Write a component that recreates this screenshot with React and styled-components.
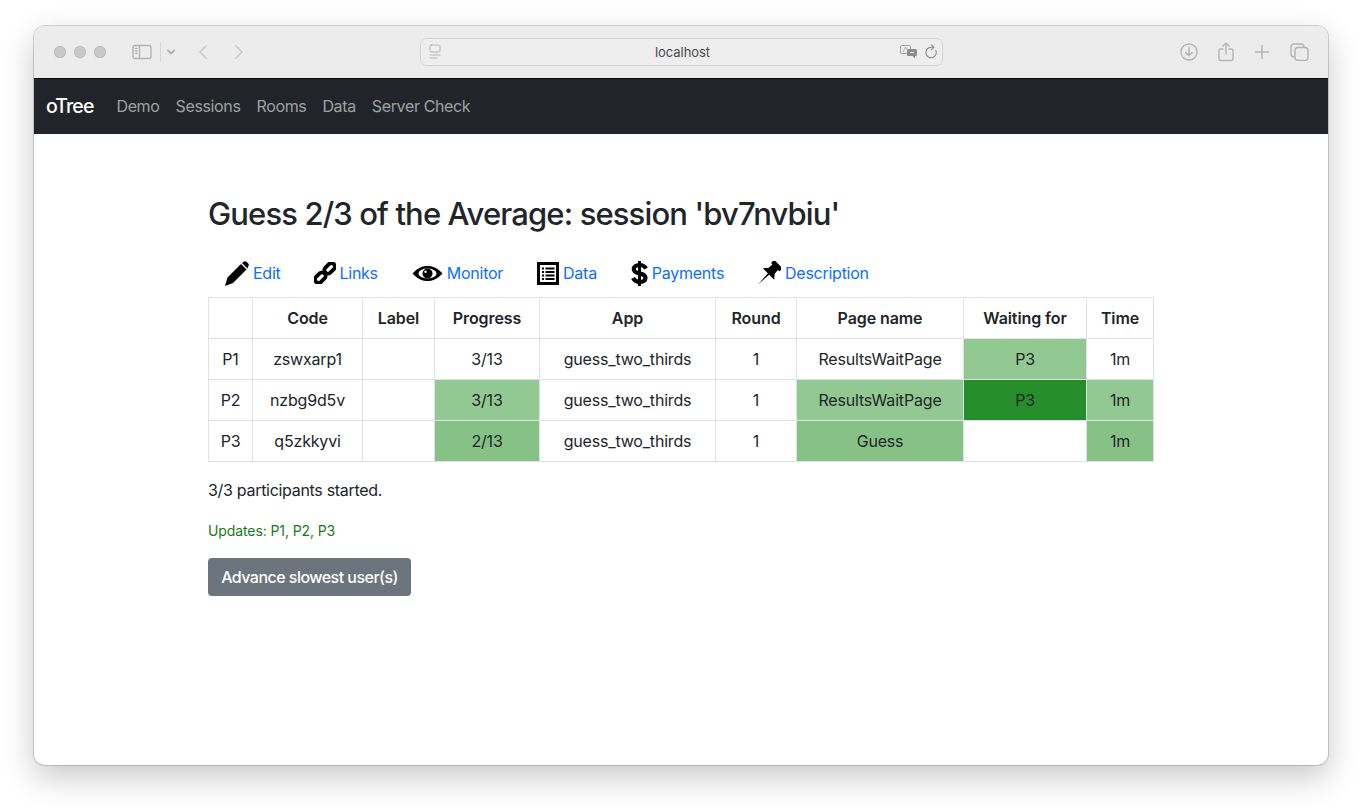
import React from "react";
import styled, { createGlobalStyle } from "styled-components";

const Global = createGlobalStyle`
  html, body { margin: 0; padding: 0; background: #fff; }
  body { font-family: Inter, "Liberation Sans", sans-serif; color: #212529; }
`;
const Stage = styled.div`
  width: 1362px; height: 807px; box-sizing: border-box; padding: 26px 34px 42px; overflow: hidden; background: #fff;
`;
const Win = styled.div`
  height: 739px; border-radius: 11px; overflow: hidden; background: #fff; display: flex; flex-direction: column;
  box-shadow: 0 0 0 1px rgba(0,0,0,.16), 0 12px 32px rgba(0,0,0,.22);
`;
const Chrome = styled.div`
  height: 52px; flex: none; background: #ececec; border-bottom: 1px solid #0b0b0b; display: grid;
  grid-template-columns: 1fr 523px 1fr; align-items: center; padding: 0 19px 0 20px; color: #b4b4b4;
`;
const ChromeLeft = styled.div`display: flex; align-items: center;`;
const ChromeRight = styled.div`display: flex; align-items: center; justify-content: flex-end; gap: 20px;`;
const Lights = styled.div`display: flex; gap: 8px; margin-right: 26px;`;
const Light = styled.span`width: 12px; height: 12px; border-radius: 50%; background: #c9c9c9; box-shadow: inset 0 0 0 1px #bdbdbd;`;
const Divider = styled.span`width: 1px; height: 20px; background: #d6d6d6; margin: 0 5px 0 8px;`;
const Spacer = styled.span`width: ${p => p.$w}px;`;
const Address = styled.div`
  height: 26px; border: 1px solid #d4d4d4; border-radius: 7px; display: flex; align-items: center; justify-content: space-between;
  padding: 0 4px 0 8px; position: relative; background: #eeeeee; margin-top: -1px;
`;
const Host = styled.span`font-size: 13px; color: #4a4a4a; position: absolute; left: 2px; right: 0; text-align: center; letter-spacing: -.05px;`;
const AddrIcons = styled.div`display: flex; align-items: center; gap: 6px;`;
const Nav = styled.nav`
  height: 55px; box-sizing: border-box; flex: none; background: #212529; display: flex; align-items: center; padding: 0 12px 2px;
`;
const Brand = styled.span`color: #fff; font-size: 19.500px; margin-right: 15px; letter-spacing: -.9px; font-weight: 500;`;
const NavItem = styled.span`color: rgba(255,255,255,.58); font-size: 16px; padding: 0 8px; letter-spacing: -.36px;`;
const Main = styled.main`padding: 61px 174px 0;`;
const Title = styled.h2`margin: 0 0 23px; font-size: 31px; line-height: 38px; font-weight: 500; letter-spacing: -.87px;`;
const Tabs = styled.div`display: flex; height: 34px; align-items: center;`;
const Tab = styled.a`
  display: flex; align-items: center; color: #0d6efd; font-size: 16px; letter-spacing: -.26px; margin-left: ${p => p.$left}px;
  svg { margin-right: ${p => p.$gap}px; flex: none; }
`;
const Table = styled.table`
  border-collapse: collapse; table-layout: fixed; width: 945px; margin-top: 7px; font-size: 16px; letter-spacing: -.18px;
`;
const Th = styled.th`
  border: 1px solid #dee2e6; height: 41px; padding: 0; font-weight: 600; text-align: center; box-sizing: border-box; letter-spacing: -.1px;
`;
const Td = styled.td`
  border: 1px solid #dee2e6; height: 41px; padding: 0; text-align: center; box-sizing: border-box; background: ${p => p.$bg || "#fff"};
`;
const Started = styled.p`margin: 19px 0 0; font-size: 16px; line-height: 19px; letter-spacing: -.3px;`;
const Updates = styled.p`margin: 22px 0 0; font-size: 14px; line-height: 17px; color: #1a7a1a; letter-spacing: -.1px;`;
const Button = styled.button`
  display: block; margin-top: 19px; width: 203px; height: 38px; border: 0; border-radius: 4px; background: #6c757d; color: #fff; padding: 0;
  font: 500 16px Inter, "Liberation Sans", sans-serif; letter-spacing: -.53px;
`;

const widths = [44, 110, 72, 105, 176, 81, 167, 123, 67];
const heads = ["", "Code", "Label", "Progress", "App", "Round", "Page name", "Waiting for", "Time"];
const L = "#92c892", D = "#258e2a", M = "#86c286";
const rows = [
  [["P1"], ["zswxarp1"], [""], ["3/13"], ["guess_two_thirds"], ["1"], ["ResultsWaitPage"], ["P3", L], ["1m"]],
  [["P2"], ["nzbg9d5v"], [""], ["3/13", L], ["guess_two_thirds"], ["1"], ["ResultsWaitPage", L], ["P3", D], ["1m", L]],
  [["P3"], ["q5zkkyvi"], [""], ["2/13", M], ["guess_two_thirds"], ["1"], ["Guess", M], [""], ["1m", M]],
];

const PencilIcon = () => (
  <svg width="24" height="25" viewBox="0 0 24 25">
    <path d="M0 25 2.500 16.500 16 3 21.500 8.500 8 22Z" fill="#000" />
    <path d="M17 2 19 .6Q20.500 -.3 21.700 .9L23.300 2.600Q24.400 3.800 23.400 5L22.500 7.500Z" fill="#000" />
  </svg>
);
const LinkIcon = () => (
  <svg width="22" height="22" viewBox="0 0 22 22" fill="none" stroke="#000" strokeWidth="3.800">
    <rect x="-3.500" y="-6.500" width="7" height="12" rx="3.500" transform="translate(15.300 6.700) rotate(45)" />
    <rect x="-3.500" y="-5.500" width="7" height="12" rx="3.500" transform="translate(6.700 15.300) rotate(45)" />
  </svg>
);
const EyeIcon = () => (
  <svg width="31" height="15" viewBox="0 0 31 15">
    <path d="M.5 7.500C6 1.500 11 0 15.500 0S25 1.500 30.500 7.500C25 13.500 20 15 15.500 15S6 13.500 .5 7.500Z" fill="#000" />
    <ellipse cx="15.500" cy="7.500" rx="9" ry="5" fill="#fff" />
    <circle cx="15.500" cy="7.500" r="5" fill="#000" />
    <circle cx="13.500" cy="5.800" r="1.200" fill="#fff" />
  </svg>
);
const DataIcon = () => (
  <svg width="22" height="23" viewBox="0 0 22 23">
    <rect x="1.500" y="1.500" width="19" height="20" fill="#fff" stroke="#000" strokeWidth="3" />
    {[5.500, 9, 12.500, 16].map(y => (
      <g key={y} fill="#000">
        <rect x="5" y={y} width="2" height="2" />
        <rect x="8.500" y={y} width="9" height="2" />
      </g>
    ))}
  </svg>
);
const DollarIcon = () => (
  <svg width="17" height="25" viewBox="0 0 17 25" fill="none" stroke="#000">
    <path d="M8.500 0V25" strokeWidth="3" />
    <path d="M15 7.500C13.500 4.800 11.500 4 8.500 4 5 4 2.800 5.800 2.800 8.200 2.800 14 14.500 10.800 14.500 17 14.500 19.500 12 21 8.500 21 5.500 21 3.500 19.800 2 17" strokeWidth="4.200" />
  </svg>
);
const PinIcon = () => (
  <svg width="23" height="24" viewBox="0 0 23 24">
    <g transform="translate(13 10.500) rotate(45)" fill="#000">
      <rect x="-6" y="-10.500" width="12" height="4.500" rx="1" />
      <path d="M-3.800 -7H3.800L4.200 -1 8 3.500H-8L-4.200 -1Z" />
      <path d="M-1 3H1L0 18.500Z" />
    </g>
  </svg>
);

const tabs = [
  { I: PencilIcon, label: "Edit", left: 17, gap: 4 },
  { I: LinkIcon, label: "Links", left: 34, gap: 3 },
  { I: EyeIcon, label: "Monitor", left: 34, gap: 4 },
  { I: DataIcon, label: "Data", left: 34, gap: 4 },
  { I: DollarIcon, label: "Payments", left: 34, gap: 4 },
  { I: PinIcon, label: "Description", left: 34, gap: 4 },
];

const Stroke = ({ w = 20, h = 20, children }) => (
  <svg width={w} height={h} viewBox={`0 0 ${w} ${h}`} fill="none" stroke="currentColor" strokeWidth="1.400" strokeLinecap="round" strokeLinejoin="round">{children}</svg>
);

export default function App() {
  return (
    <Stage>
      <Global />
      <Win>
        <Chrome>
          <ChromeLeft>
            <Lights><Light /><Light /><Light /></Lights>
            <Stroke w={20} h={16}><rect x="1" y="1.500" width="18" height="13" rx="2" /><path d="M7.500 1.500v13M3.500 4.500h1.500M3.500 7h1.500M3.500 9.500h1.500" /></Stroke>
            <Divider />
            <Stroke w={10} h={8}><path d="M2 2.500 5 5.500 8 2.500" strokeWidth="1.800" /></Stroke>
            <Spacer $w={21} />
            <Stroke w={12} h={18}><path d="M9 3 3 9l6 6" strokeWidth="1.500" stroke="#c9c9c9" /></Stroke>
            <Spacer $w={24} />
            <Stroke w={12} h={18}><path d="M3 3l6 6-6 6" strokeWidth="1.500" stroke="#c9c9c9" /></Stroke>
          </ChromeLeft>
          <Address>
            <Stroke w={12} h={15}><rect x="1" y="1" width="10" height="7" rx="1.500" strokeWidth="1" /><path d="M1 11h10M1 14h7" strokeWidth="1" /></Stroke>
            <Host>localhost</Host>
            <AddrIcons>
              <svg width="18" height="14" viewBox="0 0 18 14"><rect x="0.500" y="0.500" width="10" height="8" rx="1.500" fill="none" stroke="#a5a5a5" /><path d="M3 7 5.500 2 8 7" fill="none" stroke="#a5a5a5" strokeWidth=".8" /><path d="M8.500 4h7a1.500 1.500 0 0 1 1.500 1.500v4a1.500 1.500 0 0 1-1.500 1.500H15v2.500L12.500 11h-4A1.500 1.500 0 0 1 7 9.500v-4A1.500 1.500 0 0 1 8.500 4Z" fill="#8c8c8c" /><path d="M10 7.500h4" stroke="#eee" /></svg>
              <Stroke w={14} h={16}><path d="M11.800 6.300A5.200 5.200 0 1 1 7 3.300h2" stroke="#8a8a8a" strokeWidth="1.100" /><path d="M7.500 1 10 3.300 7.500 5.600" stroke="#8a8a8a" strokeWidth="1.100" /></Stroke>
            </AddrIcons>
          </Address>
          <ChromeRight>
            <Stroke w={18} h={18}><circle cx="9" cy="9" r="8" /><path d="M9 4.500v8M5.800 9.500 9 12.700l3.200-3.200" /></Stroke>
            <Stroke w={16} h={20}><path d="M5 7H2.500A1.500 1.500 0 0 0 1 8.500v8.500A1.500 1.500 0 0 0 2.500 18.500h11a1.500 1.500 0 0 0 1.500-1.500V8.500A1.500 1.500 0 0 0 13.500 7H11M8 12V1.500M5 4l3-3 3 3" /></Stroke>
            <Stroke w={16} h={16}><path d="M8 1.500v13M1.500 8h13" /></Stroke>
            <Stroke w={19} h={18}><rect x="1" y="1" width="13" height="13" rx="3" /><rect x="5" y="4.500" width="13" height="13" rx="3" fill="#ececec" /></Stroke>
          </ChromeRight>
        </Chrome>
        <Nav>
          <Brand>oTree</Brand>
          {["Demo", "Sessions", "Rooms", "Data", "Server Check"].map(n => <NavItem key={n}>{n}</NavItem>)}
        </Nav>
        <Main>
          <Title>Guess 2/3 of the Average: session 'bv7nvbiu'</Title>
          <Tabs>
            {tabs.map(({ I, label, left, gap }) => (
              <Tab key={label} $left={left} $gap={gap}><I />{label}</Tab>
            ))}
          </Tabs>
          <Table>
            <colgroup>{widths.map((w, i) => <col key={i} width={w} />)}</colgroup>
            <thead><tr>{heads.map((h, i) => <Th key={i}>{h}</Th>)}</tr></thead>
            <tbody>
              {rows.map((r, i) => <tr key={i}>{r.map(([t, bg], j) => <Td key={j} $bg={bg}>{t}</Td>)}</tr>)}
            </tbody>
          </Table>
          <Started>3/3 participants started.</Started>
          <Updates>Updates: P1, P2, P3</Updates>
          <Button>Advance slowest user(s)</Button>
        </Main>
      </Win>
    </Stage>
  );
}
